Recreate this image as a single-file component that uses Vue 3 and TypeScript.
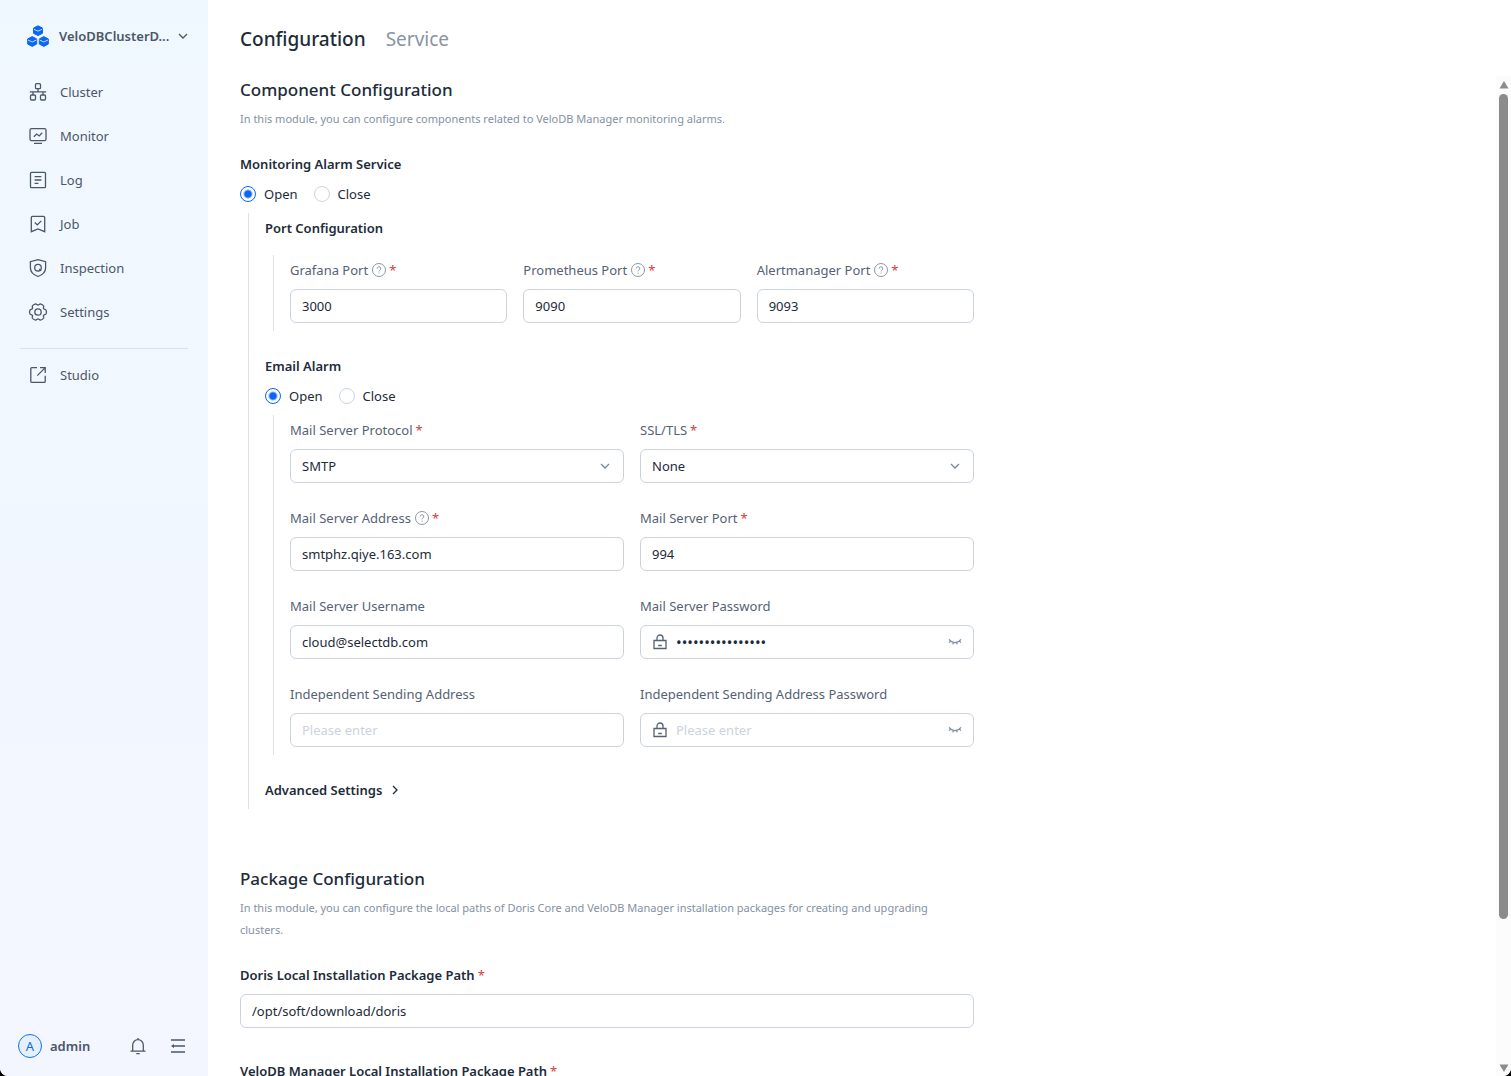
<script setup lang="ts">
import { reactive, ref } from 'vue'

interface NavItem {
  name: string
  icon: string
}

interface PortField {
  id: string
  label: string
  value: string
}

const navItems: NavItem[] = [
  { name: 'Cluster', icon: 'cluster' },
  { name: 'Monitor', icon: 'monitor' },
  { name: 'Log', icon: 'log' },
  { name: 'Job', icon: 'job' },
  { name: 'Inspection', icon: 'inspection' },
  { name: 'Settings', icon: 'settings' },
]

const ports = reactive<PortField[]>([
  { id: 'grafana', label: 'Grafana Port', value: '3000' },
  { id: 'prometheus', label: 'Prometheus Port', value: '9090' },
  { id: 'alertmanager', label: 'Alertmanager Port', value: '9093' },
])

const alarmService = ref('open')
const emailAlarm = ref('open')
const mail = reactive({
  protocol: 'SMTP',
  tls: 'None',
  address: 'smtphz.qiye.163.com',
  port: '994',
  username: 'cloud@selectdb.com',
  password: 'velodb-mail-0001',
  sender: '',
  senderPassword: '',
})
const dorisPath = ref('/opt/soft/download/doris')
const managerPath = ref('/opt/soft/download/manager')
</script>

<template>
  <div class="app">
    <aside class="sidebar">
      <button class="cluster-switch" type="button">
        <svg class="logo" viewBox="0 0 24 24" width="24" height="24" aria-hidden="true">
          <g fill="#0a66f5" stroke="#0a66f5" stroke-width="1" stroke-linejoin="round">
            <path d="M12 1.800l4.500 2.300v5.200L12 11.600 7.500 9.300V4.100z" />
            <path d="M6.200 12.600l4.500 2.300v5.200l-4.500 2.300-4.500-2.300v-5.200z" />
            <path d="M17.800 12.600l4.500 2.300v5.200l-4.500 2.300-4.500-2.300v-5.200z" />
          </g>
          <g fill="none" stroke="#f0f7ff" stroke-width=".8">
            <path d="M7.800 5.200L12 7.200l4.200-2" />
            <path d="M2 16l4.200 2 4.200-2" />
            <path d="M13.600 16l4.200 2 4.200-2" />
          </g>
        </svg>
        <span class="cluster-name">VeloDBClusterD...</span>
        <svg class="line-icon" viewBox="0 0 10 10" width="10" height="10" aria-hidden="true">
          <path d="M1 3l4 4 4-4" />
        </svg>
      </button>

      <nav class="nav">
        <a v-for="item in navItems" :key="item.name" class="nav-item" href="#">
          <svg class="line-icon" viewBox="0 0 20 20" width="20" height="20" aria-hidden="true">
            <template v-if="item.icon === 'cluster'">
              <rect x="7.500" y="1.700" width="5" height="5" rx="1" />
              <rect x="2.500" y="13" width="5" height="5" rx="1" />
              <rect x="12.500" y="13" width="5" height="5" rx="1" />
              <path d="M10 6.700V9.800M1.800 9.800H18.200M5 9.800V13M15 9.800V13" />
            </template>
            <template v-else-if="item.icon === 'monitor'">
              <rect x="2" y="2.700" width="16" height="12" rx="1.500" />
              <path d="M6 17.400h8M5.800 10.800L8.600 8l2.600 2L14.200 6.800" />
            </template>
            <template v-else-if="item.icon === 'log'">
              <rect x="2.500" y="2.300" width="15" height="15.400" rx="1" />
              <path d="M6.600 6.700h6.800M6.600 10h6.800M6.600 13.300h3.800" />
            </template>
            <template v-else-if="item.icon === 'job'">
              <path d="M3.300 17.700V3.600a1.200 1.200 0 0 1 1.200-1.200h11a1.200 1.200 0 0 1 1.200 1.200v14.100L10 15z" />
              <path d="M6.800 8.500l2.500 2.400 4-4" />
            </template>
            <template v-else-if="item.icon === 'inspection'">
              <path d="M10 1.700l7.600 2v6.100c0 4.200-3 7.100-7.600 8.700-4.600-1.600-7.600-4.500-7.600-8.700V3.700z" />
              <circle cx="10" cy="9.700" r="3.300" />
              <path d="M11.200 11l1.800 1.900" />
            </template>
            <template v-else>
              <path d="M10 3.100c1 0 1.400-1.300 2.400-1.300 1.400.300 2.700 1.200 3.300 2.200.200.900-.600 1.700-.200 2.500.500 1 2.100.700 2.600 1.700.500 1.200.500 2.400 0 3.600-.500 1-2.100.700-2.600 1.700-.400.800.400 1.600.200 2.500-.600 1-1.900 1.900-3.300 2.200-1 0-1.400-1.300-2.400-1.300s-1.400 1.300-2.400 1.300c-1.400-.300-2.700-1.200-3.300-2.200-.200-.900.600-1.700.200-2.500-.500-1-2.100-.700-2.600-1.700-.500-1.200-.500-2.400 0-3.600.500-1 2.100-.700 2.600-1.700.400-.800-.400-1.600-.200-2.500.600-1 1.900-1.900 3.300-2.200 1 0 1.400 1.300 2.400 1.300z" />
              <circle cx="10" cy="10" r="3.200" />
            </template>
          </svg>
          <span>{{ item.name }}</span>
        </a>
      </nav>

      <div class="studio">
        <a class="nav-item" href="#">
          <svg class="line-icon" viewBox="0 0 20 20" width="20" height="20" aria-hidden="true">
            <path d="M9 2.700H3.700a.900.900 0 0 0-.900.900v12.800a.900.900 0 0 0 .900.900h12.600a.900.900 0 0 0 .900-.900V10.800" />
            <path d="M12 2.700h5.200V8M17 2.900L9.300 10.600" />
          </svg>
          <span>Studio</span>
        </a>
      </div>

      <footer class="account">
        <button class="user" type="button">
          <span class="avatar">A</span>
          <span>admin</span>
        </button>
        <button class="icon-button" type="button" aria-label="Notifications">
          <svg class="line-icon" viewBox="0 0 18 18" width="18" height="18" aria-hidden="true">
            <path d="M1.500 14.200h15M3.700 14V8a5.300 5.300 0 0 1 10.600 0v6M9 2.700V1M7.300 16.600h3.400" />
          </svg>
        </button>
        <button class="icon-button" type="button" aria-label="Collapse menu">
          <svg class="line-icon" viewBox="0 0 18 18" width="18" height="18" aria-hidden="true">
            <path d="M2 3h14M5 9h11M2 15h14" />
            <path d="M2 9l3-2v4z" class="solid" />
          </svg>
        </button>
      </footer>
    </aside>

    <main class="main">
      <header class="tabs">
        <a class="tab tab-active" href="#">Configuration</a>
        <a class="tab" href="#">Service</a>
      </header>

      <div class="body">
        <div class="scroller">
          <form class="content" @submit.prevent>
            <section>
              <h2>Component Configuration</h2>
              <p class="hint">In this module, you can configure components related to VeloDB Manager monitoring alarms.</p>

              <fieldset class="block">
                <legend class="title">Monitoring Alarm Service</legend>
                <div class="radios">
                  <label><input v-model="alarmService" type="radio" name="alarm" value="open" />Open</label>
                  <label><input v-model="alarmService" type="radio" name="alarm" value="close" />Close</label>
                </div>
              </fieldset>

              <div class="branch">
                <h3 class="title">Port Configuration</h3>
                <div class="branch branch-ports">
                  <div class="grid three">
                    <div v-for="port in ports" :key="port.id" class="field">
                      <label :for="port.id">
                        {{ port.label }}
                        <svg class="help" viewBox="0 0 14 14" width="14" height="14" aria-hidden="true">
                          <circle cx="7" cy="7" r="6.500" />
                          <path d="M5.200 5.600a1.800 1.800 0 1 1 2.700 1.500c-.600.400-.900.600-.900 1.300M7 9.600v1" />
                        </svg>
                        <span class="required">*</span>
                      </label>
                      <input :id="port.id" v-model="port.value" class="control" type="text" />
                    </div>
                  </div>
                </div>

                <fieldset class="block">
                  <legend class="title">Email Alarm</legend>
                  <div class="radios">
                    <label><input v-model="emailAlarm" type="radio" name="email" value="open" />Open</label>
                    <label><input v-model="emailAlarm" type="radio" name="email" value="close" />Close</label>
                  </div>
                </fieldset>

                <div class="branch">
                  <div class="grid two">
                    <div class="field">
                      <label for="protocol">Mail Server Protocol<span class="required">*</span></label>
                      <div class="wrap">
                        <select id="protocol" v-model="mail.protocol" class="control">
                          <option>SMTP</option>
                        </select>
                        <svg class="line-icon arrow" viewBox="0 0 10 10" width="10" height="10" aria-hidden="true">
                          <path d="M1 3l4 4 4-4" />
                        </svg>
                      </div>
                    </div>
                    <div class="field">
                      <label for="tls">SSL/TLS<span class="required">*</span></label>
                      <div class="wrap">
                        <select id="tls" v-model="mail.tls" class="control">
                          <option>None</option>
                          <option>SSL</option>
                          <option>TLS</option>
                        </select>
                        <svg class="line-icon arrow" viewBox="0 0 10 10" width="10" height="10" aria-hidden="true">
                          <path d="M1 3l4 4 4-4" />
                        </svg>
                      </div>
                    </div>
                    <div class="field">
                      <label for="address">
                        Mail Server Address
                        <svg class="help" viewBox="0 0 14 14" width="14" height="14" aria-hidden="true">
                          <circle cx="7" cy="7" r="6.500" />
                          <path d="M5.200 5.600a1.800 1.800 0 1 1 2.700 1.500c-.600.400-.900.600-.900 1.300M7 9.600v1" />
                        </svg>
                        <span class="required">*</span>
                      </label>
                      <input id="address" v-model="mail.address" class="control" type="text" />
                    </div>
                    <div class="field">
                      <label for="mail-port">Mail Server Port<span class="required">*</span></label>
                      <input id="mail-port" v-model="mail.port" class="control" type="text" />
                    </div>
                    <div class="field">
                      <label for="username">Mail Server Username</label>
                      <input id="username" v-model="mail.username" class="control" type="text" />
                    </div>
                    <div class="field">
                      <label for="password">Mail Server Password</label>
                      <div class="control secret">
                        <svg class="line-icon" viewBox="0 0 16 16" width="16" height="16" aria-hidden="true">
                          <path d="M2 6.500h12v8H2zM5 6.500V4a3 3 0 0 1 6 0v2.500M6.200 11.500h3.600" />
                        </svg>
                        <input id="password" v-model="mail.password" type="password" placeholder="Please enter" autocomplete="off" />
                        <button class="icon-button" type="button" aria-label="Show password">
                          <svg class="line-icon eye" viewBox="0 0 14 14" width="14" height="14" aria-hidden="true">
                            <path d="M1 4.300c3.200 4.300 8.800 4.300 12 0M2.600 6L1.200 7.600M5.400 7.500L4.800 9.400M8.600 7.500l.600 1.900M11.400 6l1.400 1.600" />
                          </svg>
                        </button>
                      </div>
                    </div>
                    <div class="field">
                      <label for="sender">Independent Sending Address</label>
                      <input id="sender" v-model="mail.sender" class="control" type="text" placeholder="Please enter" />
                    </div>
                    <div class="field">
                      <label for="sender-password">Independent Sending Address Password</label>
                      <div class="control secret">
                        <svg class="line-icon" viewBox="0 0 16 16" width="16" height="16" aria-hidden="true">
                          <path d="M2 6.500h12v8H2zM5 6.500V4a3 3 0 0 1 6 0v2.500M6.200 11.500h3.600" />
                        </svg>
                        <input id="sender-password" v-model="mail.senderPassword" type="password" placeholder="Please enter" autocomplete="off" />
                        <button class="icon-button" type="button" aria-label="Show password">
                          <svg class="line-icon eye" viewBox="0 0 14 14" width="14" height="14" aria-hidden="true">
                            <path d="M1 4.300c3.200 4.300 8.800 4.300 12 0M2.600 6L1.200 7.600M5.400 7.500L4.800 9.400M8.600 7.500l.600 1.900M11.400 6l1.400 1.600" />
                          </svg>
                        </button>
                      </div>
                    </div>
                  </div>
                </div>

                <button class="advanced title" type="button">
                  Advanced Settings
                  <svg class="line-icon" viewBox="0 0 10 10" width="10" height="10" aria-hidden="true">
                    <path d="M3 1l4 4-4 4" />
                  </svg>
                </button>
              </div>
            </section>

            <section class="package">
              <h2>Package Configuration</h2>
              <p class="hint">In this module, you can configure the local paths of Doris Core and VeloDB Manager installation packages for creating and upgrading clusters.</p>
              <div class="paths">
                <div class="field">
                  <label class="title" for="doris-path">Doris Local Installation Package Path<span class="required">*</span></label>
                  <input id="doris-path" v-model="dorisPath" class="control" type="text" />
                </div>
                <div class="field">
                  <label class="title" for="manager-path">VeloDB Manager Local Installation Package Path<span class="required">*</span></label>
                  <input id="manager-path" v-model="managerPath" class="control" type="text" />
                </div>
              </div>
            </section>
          </form>
        </div>
        <div class="scrollbar" aria-hidden="true">
          <svg viewBox="0 0 10 8" width="10" height="8"><path d="M5 0l4.500 7.500h-9z" /></svg>
          <div class="track"><div class="thumb"></div></div>
          <svg viewBox="0 0 10 8" width="10" height="8"><path d="M5 8L.500.500h9z" /></svg>
        </div>
      </div>
    </main>
  </div>
</template>

<style>
body {
  background: #000;
}
</style>

<style scoped>
.app {
  display: flex;
  height: 100vh;
  overflow: hidden;
  border-radius: 0 0 8px 8px;
  background: #fff;
  color: #1d2b3a;
  font: 13px/22px "Noto Sans", "Open Sans", sans-serif;
}

.app *,
.app *::before {
  box-sizing: border-box;
}

a {
  color: inherit;
  text-decoration: none;
}

button {
  padding: 0;
  border: 0;
  background: none;
  color: inherit;
  font: inherit;
  cursor: pointer;
}

svg {
  flex: none;
  display: block;
}

.line-icon {
  fill: none;
  stroke: currentColor;
  stroke-width: 1.3;
}

.solid {
  fill: currentColor;
  stroke: none;
}

.sidebar {
  flex: none;
  display: flex;
  flex-direction: column;
  width: 208px;
  background: linear-gradient(#f0f8ff, #f3f6ff);
  color: #4b5768;
}

.cluster-switch {
  display: flex;
  align-items: center;
  height: 24px;
  margin: 24px 20px 22px 26px;
  font-weight: 600;
}

.cluster-name {
  flex: 1;
  margin-left: 9px;
  text-align: left;
  white-space: nowrap;
}

.nav-item {
  display: flex;
  align-items: center;
  gap: 12px;
  height: 44px;
  padding-left: 28px;
}

.studio {
  margin: 14px 20px 0;
  padding-top: 4px;
  border-top: 1px solid #dbe2ee;
}

.studio .nav-item {
  padding-left: 8px;
}

.account {
  display: flex;
  align-items: center;
  gap: 22px;
  margin-top: auto;
  padding: 0 21px 18px 18px;
}

.user {
  display: flex;
  flex: 1;
  align-items: center;
  gap: 8px;
  font-weight: 600;
}

.avatar {
  width: 24px;
  height: 24px;
  border: 1px solid #1a6fe8;
  border-radius: 50%;
  background: #e3f1ff;
  color: #1a66d8;
  font-weight: 400;
}

.main {
  display: flex;
  flex: 1;
  flex-direction: column;
  min-width: 0;
}

.tabs {
  display: flex;
  flex: none;
  gap: 20px;
  height: 76px;
  padding: 25px 32px 0;
  font-size: 19px;
  line-height: 28px;
}

.tab {
  color: #8794a6;
}

.tab-active {
  color: #1d2b3a;
  font-weight: 500;
}

.body {
  display: flex;
  flex: 1;
  min-height: 0;
}

.scroller {
  flex: 1;
  overflow-y: auto;
  scrollbar-width: none;
}

.content {
  max-width: 798px;
  padding: 0 32px 48px;
}

.scrollbar {
  display: flex;
  flex: none;
  flex-direction: column;
  align-items: center;
  width: 15px;
  padding: 5px 0 4px;
  background: #fcfcfc;
  fill: #8b8b8b;
}

.track {
  flex: 1;
  width: 9px;
  padding: 5px 0;
}

.thumb {
  height: 85.5%;
  border-radius: 5px;
  background: #8b8b8b;
}

h2 {
  margin: 0 0 4px;
  font-size: 17px;
  font-weight: 500;
  line-height: 28px;
}

.hint {
  margin: 0 0 23px;
  padding-right: 24px;
  color: #8491a3;
  font-size: 11px;
}

.title {
  display: block;
  margin: 0;
  padding: 0;
  color: #1d2b3a;
  font-size: 13px;
  font-weight: 600;
}

.block {
  margin: 0;
  padding: 0;
  border: 0;
}

.radios {
  display: flex;
  gap: 16px;
  padding: 8px 0;
}

.radios label {
  display: flex;
  align-items: center;
  gap: 8px;
}

.radios input {
  width: 16px;
  height: 16px;
  margin: 0;
  border: 1px solid #ccd4df;
  border-radius: 50%;
  background: #fff;
  appearance: none;
}

.radios input:checked {
  border-color: #0a66f5;
  background: radial-gradient(circle, #0a66f5 3px, #fff 5px);
}

.branch {
  margin-left: 8px;
  padding: 4px 0 8px 16px;
  border-left: 1px solid #dce1e6;
}

.branch .branch {
  margin-bottom: 24px;
}

.branch-ports {
  margin-top: 16px;
}

.grid {
  display: grid;
  gap: 24px 16px;
}

.three {
  grid-template-columns: repeat(3, 1fr);
}

.two {
  grid-template-columns: repeat(2, 1fr);
}

.field {
  display: flex;
  flex-direction: column;
  gap: 8px;
  min-width: 0;
  color: #566274;
}

.field label {
  display: flex;
  align-items: center;
  gap: 3px;
  white-space: nowrap;
}

.required {
  color: #d0403c;
  font-weight: 400;
}

.help {
  margin-left: 1px;
  fill: none;
  stroke: #8a95a6;
}

.control {
  width: 100%;
  height: 34px;
  padding: 0 11px;
  border: 1px solid #ccd3de;
  border-radius: 6px;
  background: #fff;
  color: #1d2b3a;
  font: inherit;
  appearance: none;
}

.wrap {
  position: relative;
}

.arrow {
  position: absolute;
  top: 12px;
  right: 14px;
  color: #7c8899;
  pointer-events: none;
}

.secret {
  display: flex;
  align-items: center;
  gap: 8px;
  color: #566274;
}

.secret input {
  flex: 1;
  min-width: 0;
  padding: 0;
  border: 0;
  outline: 0;
  background: none;
  color: #1d2b3a;
  font: inherit;
}

.secret input:not(:placeholder-shown) {
  font-size: 15px;
}

input::placeholder {
  color: #ccd3de;
}

.eye {
  color: #8491a3;
}

.advanced {
  display: flex;
  align-items: center;
  gap: 8px;
}

.package {
  margin-top: 56px;
}

.paths {
  display: flex;
  flex-direction: column;
  gap: 32px;
}
</style>
